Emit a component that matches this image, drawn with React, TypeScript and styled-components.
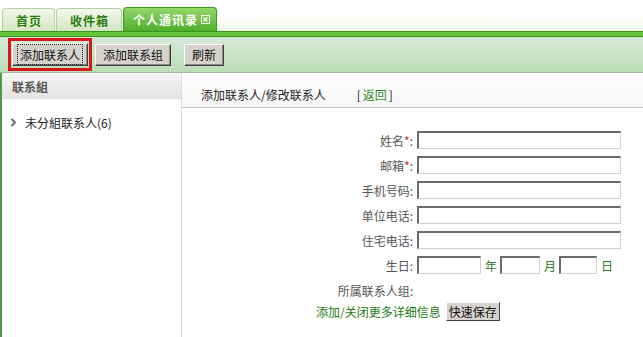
import React from 'react';
import styled, {createGlobalStyle} from 'styled-components';

const GlobalStyle = createGlobalStyle`
    html, body {
        margin: 0;
        padding: 0;
        background: #fff;
        font-family: "Noto Sans CJK SC", "Liberation Sans", sans-serif;
        font-size: 12px;
        color: #222;
    }
`

const Page = styled.div`
    width: 643px;
    height: 337px;
    display: flex;
    flex-direction: column;
    overflow: hidden;
`

const TabBar = styled.div`
    height: 31px;
    display: flex;
    align-items: flex-end;
    gap: 1px;
    padding-left: 2px;
    background: linear-gradient(to bottom, #ffffff 55%, #ecf5e0 100%);
`

const Tab = styled.div<{active?: boolean}>`
    height: ${p => p.active ? 23 : 22}px;
    display: flex;
    align-items: center;
    gap: 3px;
    padding: ${p => p.active ? '0 6px 0 9px' : '0 12px 0 13px'};
    border: 1px solid ${p => p.active ? '#3e9420' : '#b3cfa4'};
    border-bottom: none;
    border-radius: 4px 4px 0 0;
    background: ${p => p.active
        ? 'linear-gradient(to bottom, #93d86a, #4fae2c)'
        : 'linear-gradient(to bottom, #f3f9ec, #d0e7bf)'};
    color: ${p => p.active ? '#fff' : '#2d7a12'};
    font-weight: bold;
    font-size: 12px;
    letter-spacing: 1px;
`

const GreenBar = styled.div`
    height: 4px;
    border-top: 1px solid #3a931a;
    border-bottom: 1px solid #3a931a;
    background: #67c43d;
`

const Toolbar = styled.div`
    height: 35px;
    display: flex;
    align-items: center;
    padding-left: 8px;
    background: linear-gradient(to bottom, #d8e9d6, #bcddb7);
    border-bottom: 1px solid #a3b9a1;
`

const FocusBox = styled.div`
    border: 3px solid #d8161b;
    padding: 2px 1px;
    display: flex;
`

const Button = styled.button<{gap?: number}>`
    margin-left: ${p => p.gap || 0}px;
    height: ${p => p.gap === undefined ? 23 : 22}px;
    padding: 0 ${p => p.gap === undefined ? 5 : 7}px;
    background: #d6d3cc;
    border: 1px solid;
    border-color: #ffffff #404040 #404040 #ffffff;
    box-shadow: inset -1px -1px 0 #8a8a8a;
    font-family: inherit;
    font-size: 12px;
    color: #111;
    line-height: 1;
    cursor: pointer;
`

const FocusLabel = styled.span`
    outline: 1px dotted #222;
    padding: 1px 2px;
`

const Main = styled.div`
    flex: 1;
    display: flex;
`

const Sidebar = styled.div`
    width: 179px;
    border-left: 2px solid #4b9b45;
    border-right: 1px solid #dcdcdc;
`

const SideHeader = styled.div`
    height: 26px;
    display: flex;
    align-items: center;
    padding-left: 10px;
    background: linear-gradient(to bottom, #f6f6f6, #e3e3e3);
    font-weight: bold;
    color: #555;
`

const TreeItem = styled.div`
    display: flex;
    align-items: center;
    gap: 8px;
    padding: 15px 0 0 8px;
    color: #222;
`

const Content = styled.div`
    flex: 1;
    display: flex;
    flex-direction: column;
`

const ContentHeader = styled.div`
    height: 35px;
    display: flex;
    align-items: flex-end;
    padding: 0 0 4px 19px;
    box-sizing: border-box;
    background: linear-gradient(to bottom, #ffffff, #f6f6f6);
    border-bottom: 1px solid #cacaca;
    color: #222;
`

const BackLink = styled.span`
    margin-left: 31px;
    color: #222;
    span {
        color: #2b8a22;
        padding: 0 2px;
    }
`

const Form = styled.div`
    display: grid;
    grid-template-columns: 231px 1fr;
    column-gap: 4px;
    row-gap: 7px;
    padding-top: 23px;
`

const Label = styled.div`
    height: 18px;
    display: flex;
    align-items: center;
    justify-content: flex-end;
    color: #555;
    white-space: nowrap;
`

const Star = styled.span`
    color: #c8281a;
`

const Input = styled.input<{w?: number}>`
    width: ${p => p.w || 204}px;
    height: 18px;
    box-sizing: border-box;
    margin: 0;
    padding: 0 2px;
    border-style: solid;
    border-width: 2px 1px 1px 2px;
    border-color: #6a6a6a #cfcfcf #cfcfcf #6a6a6a;
    background: #fff;
    font-family: inherit;
    font-size: 12px;
`

const DateRow = styled.div`
    display: flex;
    align-items: center;
    color: #2b7a22;
    span {
        margin: 0 3px 0 4px;
    }
`

const Footer = styled.div`
    display: flex;
    align-items: center;
    gap: 5px;
    padding: 3px 0 0 134px;
    color: #1d7a16;
`

const SmallButton = styled.button`
    height: 19px;
    padding: 0 2px;
    background: #d6d3cc;
    border: 1px solid;
    border-color: #ffffff #404040 #404040 #ffffff;
    font-family: inherit;
    font-size: 12px;
    color: #111;
    line-height: 1;
`

const CloseIcon = () => (
    <svg width="9" height="9" viewBox="0 0 9 9">
        <rect x="0.5" y="0.5" width="8" height="8" fill="none" stroke="#fff" strokeWidth="1" />
        <path d="M2.5 2.5 L6.5 6.5 M6.5 2.5 L2.5 6.5" stroke="#fff" strokeWidth="1.2" />
    </svg>
)

const Chevron = () => (
    <svg width="7" height="9" viewBox="0 0 7 9">
        <path d="M1.5 1 L5 4.5 L1.5 8" fill="none" stroke="#666" strokeWidth="1.8" />
    </svg>
)

const fields = [
    {label: '姓名', required: true},
    {label: '邮箱', required: true},
    {label: '手机号码'},
    {label: '单位电话'},
    {label: '住宅电话'},
]

export default function App() {
    return (
        <>
            <GlobalStyle />
            <Page>
                <TabBar>
                    <Tab>首页</Tab>
                    <Tab>收件箱</Tab>
                    <Tab active>个人通讯录<CloseIcon /></Tab>
                </TabBar>
                <GreenBar />
                <Toolbar>
                    <FocusBox>
                        <Button><FocusLabel>添加联系人</FocusLabel></Button>
                    </FocusBox>
                    <Button gap={3}>添加联系组</Button>
                    <Button gap={13}>刷新</Button>
                </Toolbar>
                <Main>
                    <Sidebar>
                        <SideHeader>联系組</SideHeader>
                        <TreeItem><Chevron />未分組联系人(6)</TreeItem>
                    </Sidebar>
                    <Content>
                        <ContentHeader>
                            添加联系人/修改联系人
                            <BackLink>[<span>返回</span>]</BackLink>
                        </ContentHeader>
                        <Form>
                            {fields.map(f => (
                                <React.Fragment key={f.label}>
                                    <Label>{f.label}{f.required && <Star>*</Star>}:</Label>
                                    <Input type="text" />
                                </React.Fragment>
                            ))}
                            <Label>生日:</Label>
                            <DateRow>
                                <Input w={64} />
                                <span>年</span>
                                <Input w={40} />
                                <span>月</span>
                                <Input w={38} />
                                <span>日</span>
                            </DateRow>
                            <Label>所属联系人组:</Label>
                            <div />
                        </Form>
                        <Footer>
                            添加/关闭更多详细信息
                            <SmallButton>快速保存</SmallButton>
                        </Footer>
                    </Content>
                </Main>
            </Page>
        </>
    )
}
